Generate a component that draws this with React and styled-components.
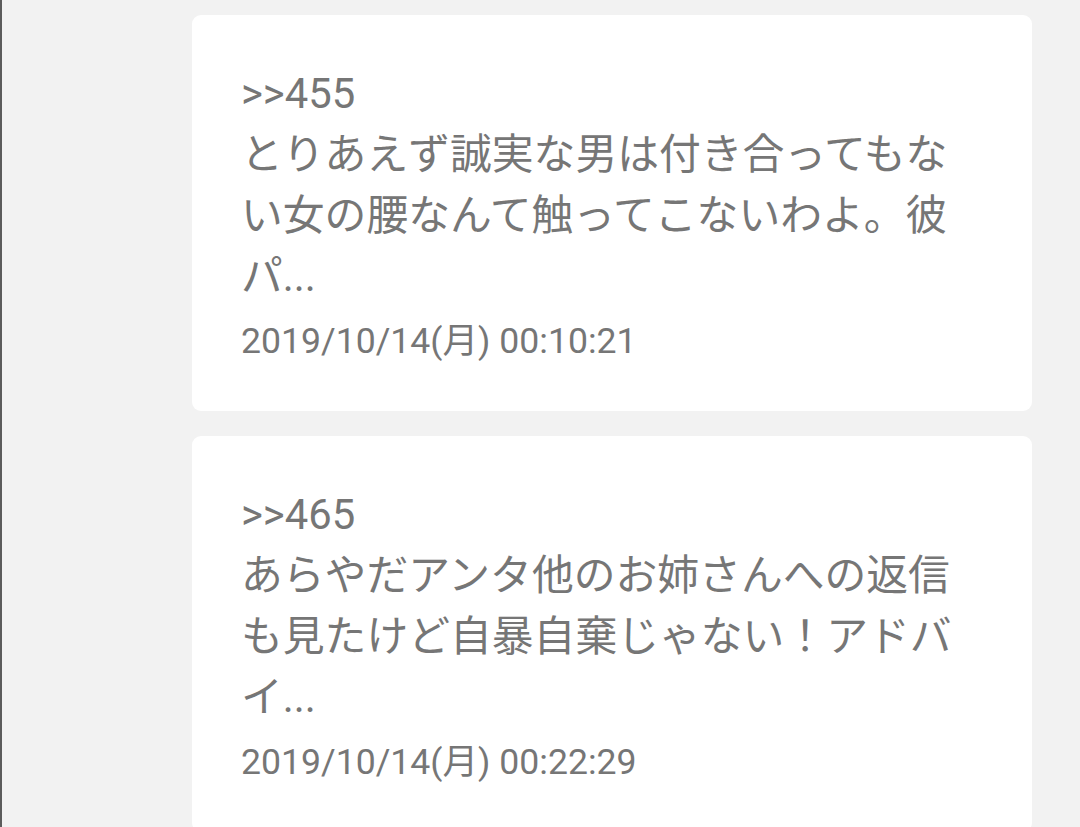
import React from 'react'
import styled, { createGlobalStyle } from 'styled-components'

const GlobalStyle = createGlobalStyle`
  html, body {
    margin: 0;
    padding: 0;
    background: #f2f2f2;
    overflow: hidden;
  }
`

const Page = styled.div`
  min-height: 827px;
  box-sizing: border-box;
  border-left: 2px solid #5c5c5c;
  padding: 15px 48px 0 190px;
  display: flex;
  flex-direction: column;
  gap: 25px;
  font-family: Roboto, "Noto Sans CJK JP", sans-serif;
  color: #767676;
`

const Card = styled.div`
  background: #ffffff;
  border-radius: 9px;
  padding: 48px 66px 44px 49px;
`

const Anchor = styled.div`
  font-size: 41.8px;
  line-height: 61px;
`

const Body = styled.div`
  font-size: 41.8px;
  line-height: 61px;
  word-break: break-all;
`

const Stamp = styled.div`
  font-size: 35.6px;
  line-height: 52px;
  margin-top: 8px;
`

const posts = [
  {
    anchor: '>>455',
    text: 'とりあえず誠実な男は付き合ってもない女の腰なんて触ってこないわよ。彼パ...',
    date: '2019/10/14(月) 00:10:21'
  },
  {
    anchor: '>>465',
    text: 'あらやだアンタ他のお姉さんへの返信も見たけど自暴自棄じゃない！アドバイ...',
    date: '2019/10/14(月) 00:22:29'
  }
]

export default function App () {
  return (
    <>
      <GlobalStyle />
      <Page>
        {posts.map(p => (
          <Card key={p.anchor}>
            <Anchor>{p.anchor}</Anchor>
            <Body>{p.text}</Body>
            <Stamp>{p.date}</Stamp>
          </Card>
        ))}
      </Page>
    </>
  )
}
